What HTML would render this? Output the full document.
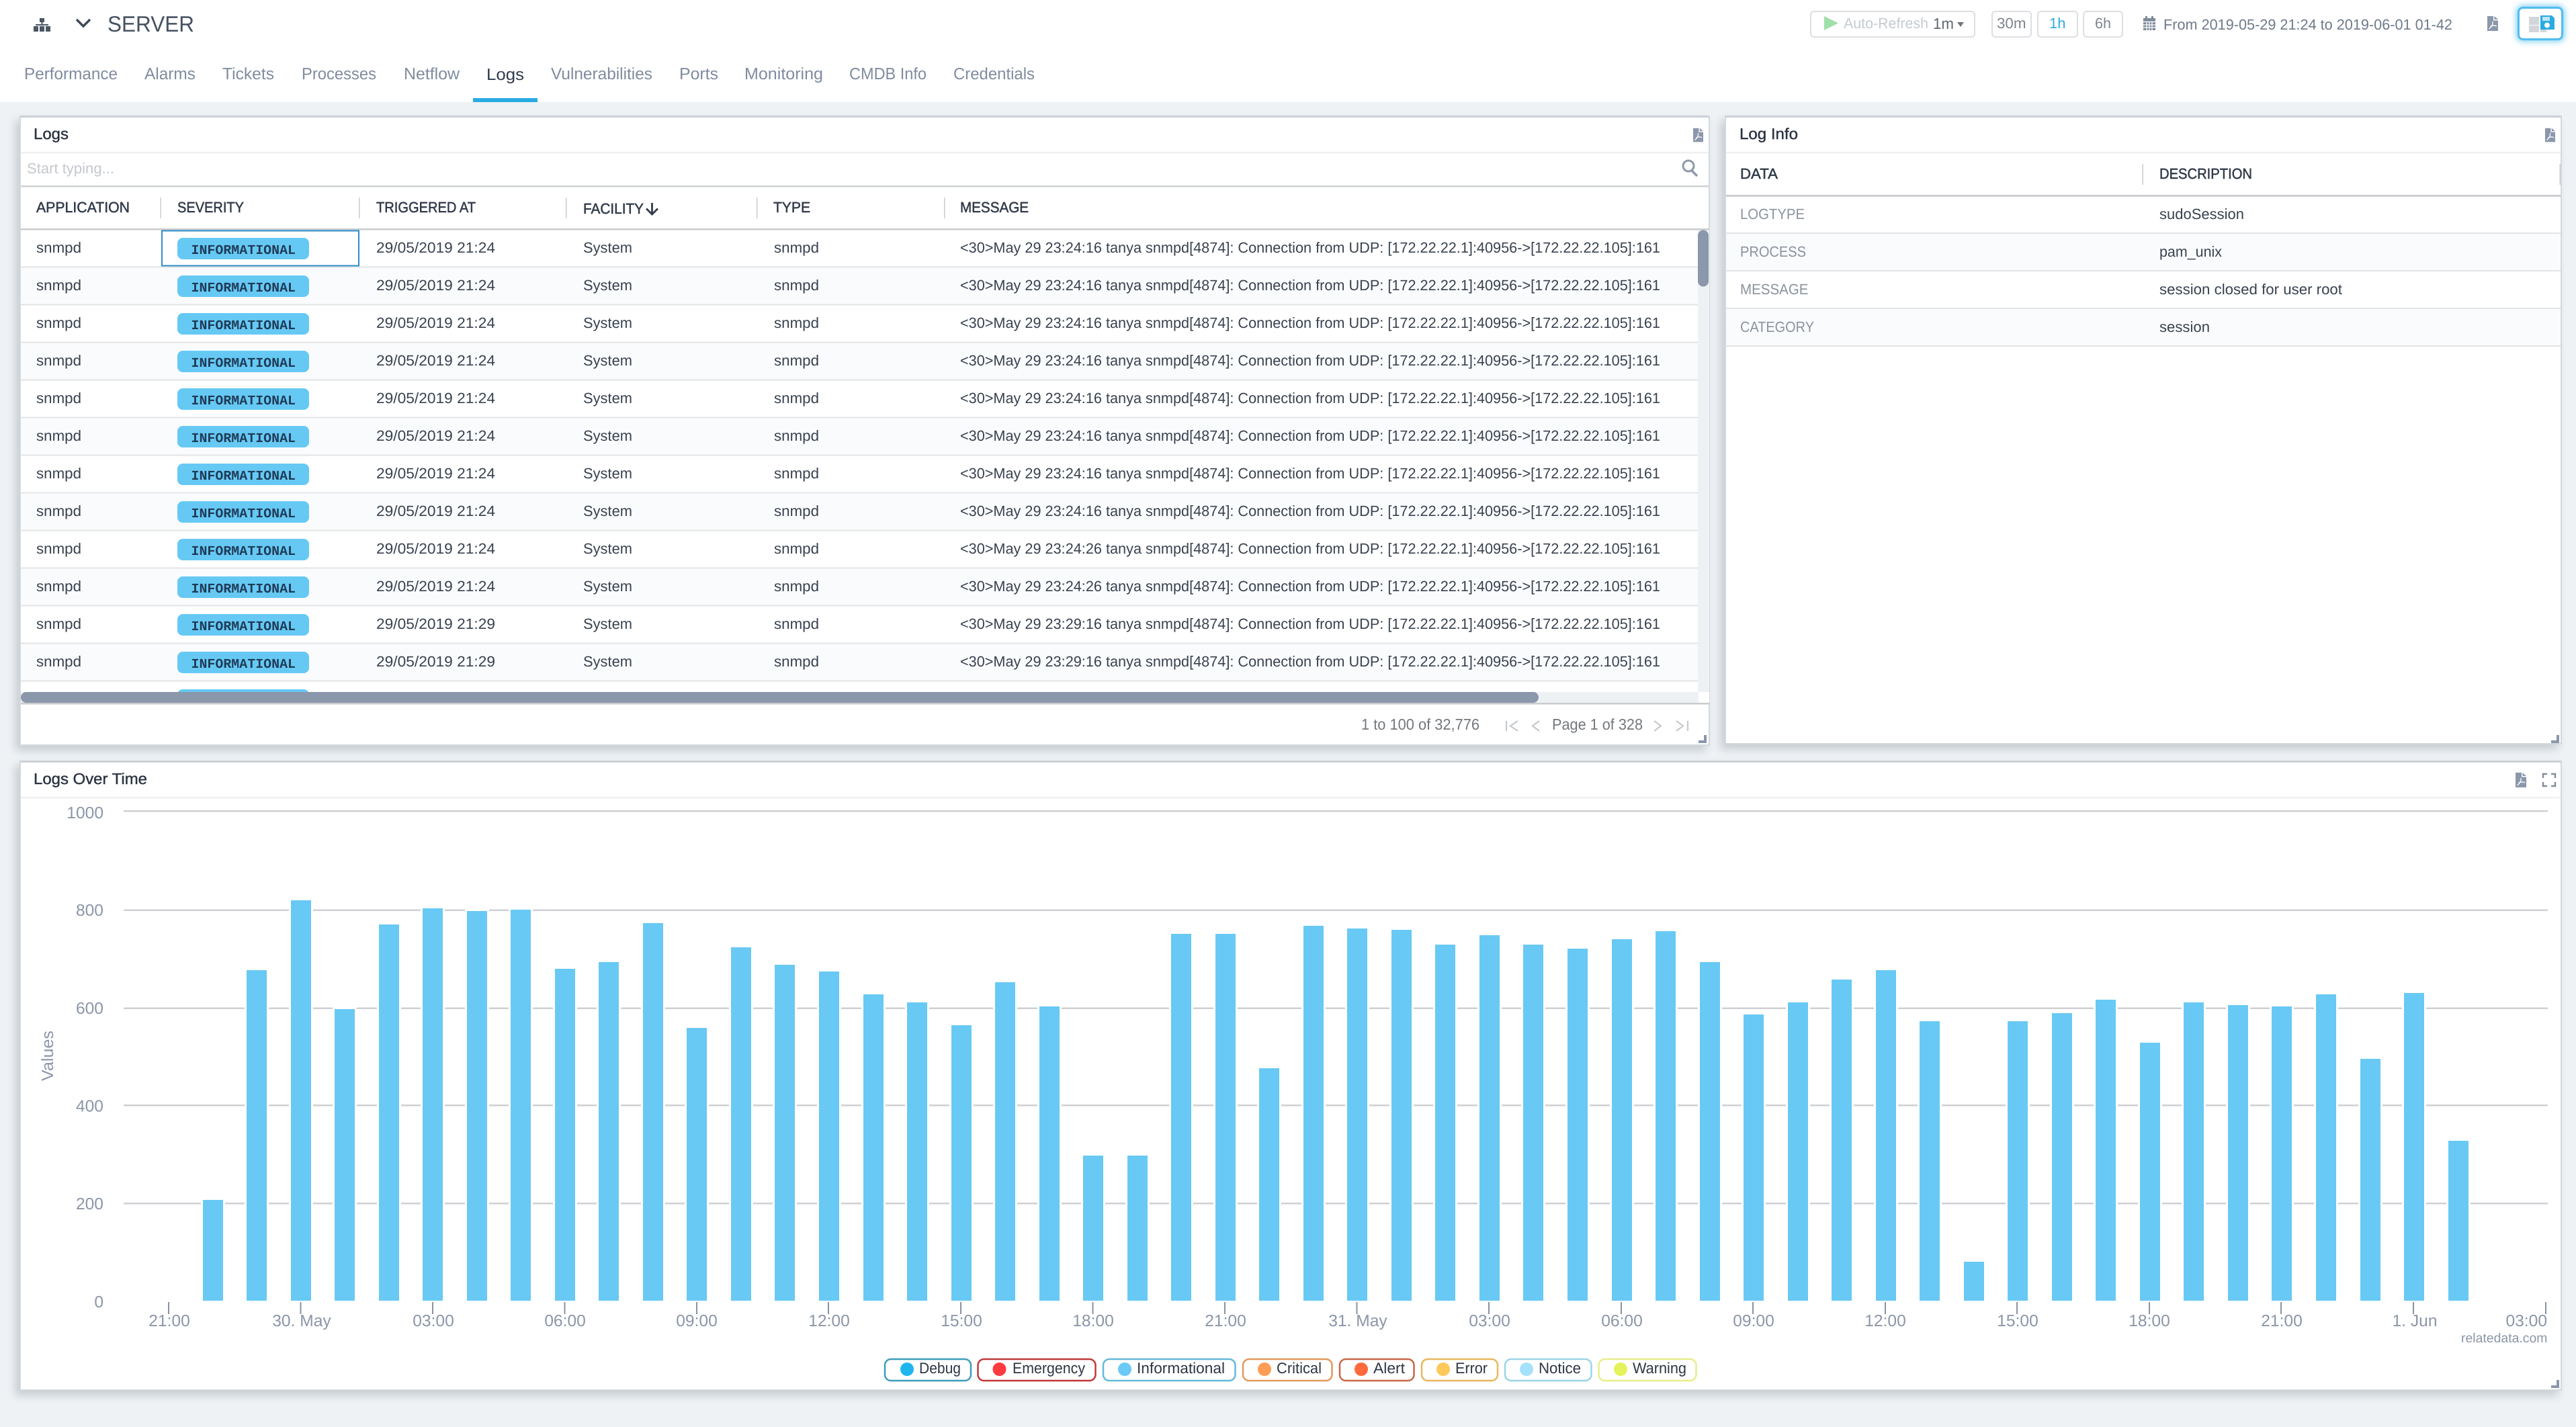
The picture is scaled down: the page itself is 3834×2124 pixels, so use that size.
<!DOCTYPE html>
<html lang="en"><head><meta charset="utf-8"><title>SERVER Logs</title>
<style>
html,body{margin:0;padding:0;width:3834px;height:2124px;overflow:hidden;background:#eef2f5}
.hd{position:absolute;left:0;top:0;width:3834px;height:152px;background:#fff}
.p{position:absolute;box-sizing:border-box;background:#fff;border:2px solid #d5d8dc;border-top:3px solid #cdd1d6;box-shadow:-6px 7px 12px rgba(45,55,65,.2)}
.sv{position:absolute;left:3747px;top:10px;width:68px;height:50px;box-sizing:border-box;background:#fff;border:3px solid #52bdee;border-radius:8px;box-shadow:0 0 9px 2px #7fd0f3}
svg{position:absolute;left:0;top:0;text-rendering:geometricPrecision}
text{font-family:"Liberation Sans",sans-serif;font-size:22px;fill:#39424f}
.tab{font-size:24.5px;fill:#7f8c9f}
.t{font-size:23px;fill:#2c3442;stroke:#2c3442;stroke-width:.45}
.h{font-size:22px;fill:#323b4a;stroke:#323b4a;stroke-width:.55}
.b{font-family:"Liberation Mono",monospace;font-size:20px;font-weight:bold;fill:#1f3b57}
.l{fill:#8a929c}
.a{font-size:24.6px;fill:#8b96a8}
.lg{font-size:22.7px;fill:#2e3644}
.pg{font-size:23px;fill:#73777c}
.btn{fill:#fff;stroke:#dcdfe2;stroke-width:2}
</style></head><body>
<div class="hd"></div>
<div class="p" style="left:29px;top:172px;width:2516px;height:938px"></div>
<div class="p" style="left:2567px;top:172px;width:1246px;height:936px"></div>
<div class="p" style="left:29px;top:1132px;width:3784px;height:938px"></div>
<div class="sv"></div>
<svg width="3834" height="2124" viewBox="0 0 3834 2124" xmlns="http://www.w3.org/2000/svg">
<defs>
<symbol id="pdf" viewBox="0 0 16 22"><path d="M0 0H9V6.5H16V22H0Z" fill="#8b97ab"/><path d="M10.5 0L16 5H10.5Z" fill="#8b97ab"/><path d="M2.5 19C6 16.5 8.5 12.500 8 8M4.500 15.500C8 13.500 11 13.500 14 15" fill="none" stroke="#fff" stroke-width="1.300"/></symbol>
<symbol id="hnd" viewBox="0 0 12 12"><path d="M8 0H12V12H0V8H8Z" fill="#8a97ab"/></symbol>
</defs>

<!-- top bar -->
<g fill="#4b5763"><rect x="59" y="27" width="7" height="6"/><rect x="61.500" y="33" width="2" height="4"/><rect x="53" y="36" width="19" height="2"/><rect x="50" y="39" width="7" height="8"/><rect x="59" y="39" width="7" height="8"/><rect x="68" y="39" width="7" height="8"/></g>
<polyline points="114,29 124,39 134,29" fill="none" stroke="#3f4a58" stroke-width="3.500"/>
<text x="160" y="47" style="font-size:33px;fill:#465262" textLength="129" lengthAdjust="spacingAndGlyphs">SERVER</text>
<text class="tab" x="36" y="118" textLength="139" lengthAdjust="spacingAndGlyphs">Performance</text>
<text class="tab" x="215" y="118" textLength="76" lengthAdjust="spacingAndGlyphs">Alarms</text>
<text class="tab" x="331" y="118" textLength="77" lengthAdjust="spacingAndGlyphs">Tickets</text>
<text class="tab" x="449" y="118" textLength="111" lengthAdjust="spacingAndGlyphs">Processes</text>
<text class="tab" x="601" y="118" textLength="83" lengthAdjust="spacingAndGlyphs">Netflow</text>
<text class="tab" x="724" y="119" style="fill:#2f3a4c" textLength="56" lengthAdjust="spacingAndGlyphs">Logs</text>
<text class="tab" x="820" y="118" textLength="151" lengthAdjust="spacingAndGlyphs">Vulnerabilities</text>
<text class="tab" x="1011" y="118" textLength="58" lengthAdjust="spacingAndGlyphs">Ports</text>
<text class="tab" x="1108" y="118" textLength="117" lengthAdjust="spacingAndGlyphs">Monitoring</text>
<text class="tab" x="1264" y="118" textLength="115" lengthAdjust="spacingAndGlyphs">CMDB Info</text>
<text class="tab" x="1419" y="118" textLength="121" lengthAdjust="spacingAndGlyphs">Credentials</text>
<rect x="704" y="146" width="96" height="6" fill="#29abe2"/>

<rect class="btn" x="2695" y="17" width="244" height="38" rx="5"/>
<polygon points="2715,24 2736,34.500 2715,45" fill="#9fe0a8"/>
<text x="2744" y="42" style="fill:#c5cbd0" textLength="126" lengthAdjust="spacingAndGlyphs">Auto-Refresh</text>
<text x="2877" y="43" style="font-size:23px;fill:#62686e" textLength="31" lengthAdjust="spacingAndGlyphs">1m</text>
<polygon points="2913,33 2923,33 2918,40" fill="#6e757c"/>
<rect class="btn" x="2965" y="17" width="58" height="38" rx="5"/>
<text x="2972" y="42" style="fill:#7e858c" textLength="43.500" lengthAdjust="spacingAndGlyphs">30m</text>
<rect class="btn" x="3033" y="17" width="59" height="38" rx="5"/>
<text x="3050" y="42" style="fill:#2bace2" textLength="24.500" lengthAdjust="spacingAndGlyphs">1h</text>
<rect class="btn" x="3101" y="17" width="58" height="38" rx="5"/>
<text x="3118" y="42" style="fill:#7e858c" textLength="24" lengthAdjust="spacingAndGlyphs">6h</text>
<g fill="#7f8b9b"><rect x="3193" y="24" width="3" height="5"/><rect x="3202" y="24" width="3" height="5"/><path d="M3190 27H3208V45H3190Z"/></g>
<path d="M3190 32.500H3208M3190 37H3208M3190 41H3208M3195 33V45M3199 33V45M3203 33V45" stroke="#fff" stroke-width="1.200" fill="none"/>
<text x="3220" y="44" style="fill:#6e7a8a" textLength="430" lengthAdjust="spacingAndGlyphs">From 2019-05-29 21:24 to 2019-06-01 01-42</text>
<use href="#pdf" x="3702" y="24" width="16" height="22"/>
<g fill="#d2d5da"><rect x="3764" y="25" width="15" height="12"/><rect x="3764" y="38" width="15" height="10"/><rect x="3781" y="44" width="9" height="4"/></g>
<path d="M3781 23H3798L3802 27V44H3781Z" fill="#29abe2"/>
<rect x="3784" y="25" width="11" height="6" fill="#bfe6f7"/>
<circle cx="3791" cy="37.500" r="4" fill="#fff"/>

<!-- Logs panel -->
<text class="t" x="50" y="207" textLength="52" lengthAdjust="spacingAndGlyphs">Logs</text>
<use href="#pdf" x="2520" y="190" width="15" height="22"/>
<rect x="31" y="226" width="2512" height="2.500" fill="#eff0f1"/>
<text x="40" y="258" style="fill:#c4c8cd" textLength="130" lengthAdjust="spacingAndGlyphs">Start typing...</text>
<circle cx="2513" cy="247" r="8" fill="none" stroke="#8e99ab" stroke-width="3"/><path d="M2518 254L2526 262" stroke="#8e99ab" stroke-width="3.500"/>
<rect x="31" y="276" width="2512" height="2.500" fill="#cfd2d5"/>
<text class="h" x="54" y="316" textLength="139" lengthAdjust="spacingAndGlyphs">APPLICATION</text>
<text class="h" x="264" y="316" textLength="99" lengthAdjust="spacingAndGlyphs">SEVERITY</text>
<text class="h" x="560" y="316" textLength="148" lengthAdjust="spacingAndGlyphs">TRIGGERED AT</text>
<text class="h" x="868" y="318" textLength="90" lengthAdjust="spacingAndGlyphs">FACILITY</text>
<path d="M970.500 302V318M962 310.500L970.500 319L979 310.500" fill="none" stroke="#323b4a" stroke-width="2.800"/>
<text class="h" x="1151" y="316" textLength="55" lengthAdjust="spacingAndGlyphs">TYPE</text>
<text class="h" x="1429" y="316" textLength="102" lengthAdjust="spacingAndGlyphs">MESSAGE</text>
<g fill="#c9ccd0"><rect x="238.500" y="294" width="1.500" height="31"/><rect x="534" y="294" width="1.500" height="31"/><rect x="842" y="294" width="1.500" height="31"/><rect x="1126" y="294" width="1.500" height="31"/><rect x="1405" y="294" width="1.500" height="31"/></g>
<rect x="31" y="340" width="2512" height="2.500" fill="#c8cbce"/>

<g fill="#fafbfd"><rect x="31" y="398" width="2496" height="55"/><rect x="31" y="510" width="2496" height="55"/><rect x="31" y="622" width="2496" height="55"/><rect x="31" y="734" width="2496" height="55"/><rect x="31" y="846" width="2496" height="55"/><rect x="31" y="958" width="2496" height="55"/></g>
<g fill="#e2e4e6"><rect x="31" y="396.500" width="2496" height="2"/><rect x="31" y="452.500" width="2496" height="2"/><rect x="31" y="508.500" width="2496" height="2"/><rect x="31" y="564.500" width="2496" height="2"/><rect x="31" y="620.500" width="2496" height="2"/><rect x="31" y="676.500" width="2496" height="2"/><rect x="31" y="732.500" width="2496" height="2"/><rect x="31" y="788.500" width="2496" height="2"/><rect x="31" y="844.500" width="2496" height="2"/><rect x="31" y="900.500" width="2496" height="2"/><rect x="31" y="956.500" width="2496" height="2"/><rect x="31" y="1012.500" width="2496" height="2"/></g>
<rect x="241" y="343.500" width="293" height="52" fill="none" stroke="#2f8fca" stroke-width="2"/>

<g fill="#66c9f4"><rect x="264" y="354" width="196" height="32" rx="8"/><rect x="264" y="410" width="196" height="32" rx="8"/><rect x="264" y="466" width="196" height="32" rx="8"/><rect x="264" y="522" width="196" height="32" rx="8"/><rect x="264" y="578" width="196" height="32" rx="8"/><rect x="264" y="634" width="196" height="32" rx="8"/><rect x="264" y="690" width="196" height="32" rx="8"/><rect x="264" y="746" width="196" height="32" rx="8"/><rect x="264" y="802" width="196" height="32" rx="8"/><rect x="264" y="858" width="196" height="32" rx="8"/><rect x="264" y="914" width="196" height="32" rx="8"/><rect x="264" y="970" width="196" height="32" rx="8"/><path d="M264 1031V1034C264 1029 268 1026 272 1026H452C456 1026 460 1029 460 1034V1031Z"/></g>

<g>
<text x="54" y="376" textLength="67" lengthAdjust="spacingAndGlyphs">snmpd</text><text class="b" x="284.500" y="378" textLength="155.500" lengthAdjust="spacingAndGlyphs">INFORMATIONAL</text><text x="560" y="376" textLength="177" lengthAdjust="spacingAndGlyphs">29/05/2019 21:24</text><text x="868" y="376" textLength="73" lengthAdjust="spacingAndGlyphs">System</text><text x="1152" y="376" textLength="67" lengthAdjust="spacingAndGlyphs">snmpd</text><text x="1429" y="376" textLength="1042" lengthAdjust="spacingAndGlyphs">&lt;30&gt;May 29 23:24:16 tanya snmpd[4874]: Connection from UDP: [172.22.22.1]:40956-&gt;[172.22.22.105]:161</text>
<text x="54" y="432" textLength="67" lengthAdjust="spacingAndGlyphs">snmpd</text><text class="b" x="284.500" y="434" textLength="155.500" lengthAdjust="spacingAndGlyphs">INFORMATIONAL</text><text x="560" y="432" textLength="177" lengthAdjust="spacingAndGlyphs">29/05/2019 21:24</text><text x="868" y="432" textLength="73" lengthAdjust="spacingAndGlyphs">System</text><text x="1152" y="432" textLength="67" lengthAdjust="spacingAndGlyphs">snmpd</text><text x="1429" y="432" textLength="1042" lengthAdjust="spacingAndGlyphs">&lt;30&gt;May 29 23:24:16 tanya snmpd[4874]: Connection from UDP: [172.22.22.1]:40956-&gt;[172.22.22.105]:161</text>
<text x="54" y="488" textLength="67" lengthAdjust="spacingAndGlyphs">snmpd</text><text class="b" x="284.500" y="490" textLength="155.500" lengthAdjust="spacingAndGlyphs">INFORMATIONAL</text><text x="560" y="488" textLength="177" lengthAdjust="spacingAndGlyphs">29/05/2019 21:24</text><text x="868" y="488" textLength="73" lengthAdjust="spacingAndGlyphs">System</text><text x="1152" y="488" textLength="67" lengthAdjust="spacingAndGlyphs">snmpd</text><text x="1429" y="488" textLength="1042" lengthAdjust="spacingAndGlyphs">&lt;30&gt;May 29 23:24:16 tanya snmpd[4874]: Connection from UDP: [172.22.22.1]:40956-&gt;[172.22.22.105]:161</text>
<text x="54" y="544" textLength="67" lengthAdjust="spacingAndGlyphs">snmpd</text><text class="b" x="284.500" y="546" textLength="155.500" lengthAdjust="spacingAndGlyphs">INFORMATIONAL</text><text x="560" y="544" textLength="177" lengthAdjust="spacingAndGlyphs">29/05/2019 21:24</text><text x="868" y="544" textLength="73" lengthAdjust="spacingAndGlyphs">System</text><text x="1152" y="544" textLength="67" lengthAdjust="spacingAndGlyphs">snmpd</text><text x="1429" y="544" textLength="1042" lengthAdjust="spacingAndGlyphs">&lt;30&gt;May 29 23:24:16 tanya snmpd[4874]: Connection from UDP: [172.22.22.1]:40956-&gt;[172.22.22.105]:161</text>
<text x="54" y="600" textLength="67" lengthAdjust="spacingAndGlyphs">snmpd</text><text class="b" x="284.500" y="602" textLength="155.500" lengthAdjust="spacingAndGlyphs">INFORMATIONAL</text><text x="560" y="600" textLength="177" lengthAdjust="spacingAndGlyphs">29/05/2019 21:24</text><text x="868" y="600" textLength="73" lengthAdjust="spacingAndGlyphs">System</text><text x="1152" y="600" textLength="67" lengthAdjust="spacingAndGlyphs">snmpd</text><text x="1429" y="600" textLength="1042" lengthAdjust="spacingAndGlyphs">&lt;30&gt;May 29 23:24:16 tanya snmpd[4874]: Connection from UDP: [172.22.22.1]:40956-&gt;[172.22.22.105]:161</text>
<text x="54" y="656" textLength="67" lengthAdjust="spacingAndGlyphs">snmpd</text><text class="b" x="284.500" y="658" textLength="155.500" lengthAdjust="spacingAndGlyphs">INFORMATIONAL</text><text x="560" y="656" textLength="177" lengthAdjust="spacingAndGlyphs">29/05/2019 21:24</text><text x="868" y="656" textLength="73" lengthAdjust="spacingAndGlyphs">System</text><text x="1152" y="656" textLength="67" lengthAdjust="spacingAndGlyphs">snmpd</text><text x="1429" y="656" textLength="1042" lengthAdjust="spacingAndGlyphs">&lt;30&gt;May 29 23:24:16 tanya snmpd[4874]: Connection from UDP: [172.22.22.1]:40956-&gt;[172.22.22.105]:161</text>
<text x="54" y="712" textLength="67" lengthAdjust="spacingAndGlyphs">snmpd</text><text class="b" x="284.500" y="714" textLength="155.500" lengthAdjust="spacingAndGlyphs">INFORMATIONAL</text><text x="560" y="712" textLength="177" lengthAdjust="spacingAndGlyphs">29/05/2019 21:24</text><text x="868" y="712" textLength="73" lengthAdjust="spacingAndGlyphs">System</text><text x="1152" y="712" textLength="67" lengthAdjust="spacingAndGlyphs">snmpd</text><text x="1429" y="712" textLength="1042" lengthAdjust="spacingAndGlyphs">&lt;30&gt;May 29 23:24:16 tanya snmpd[4874]: Connection from UDP: [172.22.22.1]:40956-&gt;[172.22.22.105]:161</text>
<text x="54" y="768" textLength="67" lengthAdjust="spacingAndGlyphs">snmpd</text><text class="b" x="284.500" y="770" textLength="155.500" lengthAdjust="spacingAndGlyphs">INFORMATIONAL</text><text x="560" y="768" textLength="177" lengthAdjust="spacingAndGlyphs">29/05/2019 21:24</text><text x="868" y="768" textLength="73" lengthAdjust="spacingAndGlyphs">System</text><text x="1152" y="768" textLength="67" lengthAdjust="spacingAndGlyphs">snmpd</text><text x="1429" y="768" textLength="1042" lengthAdjust="spacingAndGlyphs">&lt;30&gt;May 29 23:24:16 tanya snmpd[4874]: Connection from UDP: [172.22.22.1]:40956-&gt;[172.22.22.105]:161</text>
<text x="54" y="824" textLength="67" lengthAdjust="spacingAndGlyphs">snmpd</text><text class="b" x="284.500" y="826" textLength="155.500" lengthAdjust="spacingAndGlyphs">INFORMATIONAL</text><text x="560" y="824" textLength="177" lengthAdjust="spacingAndGlyphs">29/05/2019 21:24</text><text x="868" y="824" textLength="73" lengthAdjust="spacingAndGlyphs">System</text><text x="1152" y="824" textLength="67" lengthAdjust="spacingAndGlyphs">snmpd</text><text x="1429" y="824" textLength="1042" lengthAdjust="spacingAndGlyphs">&lt;30&gt;May 29 23:24:26 tanya snmpd[4874]: Connection from UDP: [172.22.22.1]:40956-&gt;[172.22.22.105]:161</text>
<text x="54" y="880" textLength="67" lengthAdjust="spacingAndGlyphs">snmpd</text><text class="b" x="284.500" y="882" textLength="155.500" lengthAdjust="spacingAndGlyphs">INFORMATIONAL</text><text x="560" y="880" textLength="177" lengthAdjust="spacingAndGlyphs">29/05/2019 21:24</text><text x="868" y="880" textLength="73" lengthAdjust="spacingAndGlyphs">System</text><text x="1152" y="880" textLength="67" lengthAdjust="spacingAndGlyphs">snmpd</text><text x="1429" y="880" textLength="1042" lengthAdjust="spacingAndGlyphs">&lt;30&gt;May 29 23:24:26 tanya snmpd[4874]: Connection from UDP: [172.22.22.1]:40956-&gt;[172.22.22.105]:161</text>
<text x="54" y="936" textLength="67" lengthAdjust="spacingAndGlyphs">snmpd</text><text class="b" x="284.500" y="938" textLength="155.500" lengthAdjust="spacingAndGlyphs">INFORMATIONAL</text><text x="560" y="936" textLength="177" lengthAdjust="spacingAndGlyphs">29/05/2019 21:29</text><text x="868" y="936" textLength="73" lengthAdjust="spacingAndGlyphs">System</text><text x="1152" y="936" textLength="67" lengthAdjust="spacingAndGlyphs">snmpd</text><text x="1429" y="936" textLength="1042" lengthAdjust="spacingAndGlyphs">&lt;30&gt;May 29 23:29:16 tanya snmpd[4874]: Connection from UDP: [172.22.22.1]:40956-&gt;[172.22.22.105]:161</text>
<text x="54" y="992" textLength="67" lengthAdjust="spacingAndGlyphs">snmpd</text><text class="b" x="284.500" y="994" textLength="155.500" lengthAdjust="spacingAndGlyphs">INFORMATIONAL</text><text x="560" y="992" textLength="177" lengthAdjust="spacingAndGlyphs">29/05/2019 21:29</text><text x="868" y="992" textLength="73" lengthAdjust="spacingAndGlyphs">System</text><text x="1152" y="992" textLength="67" lengthAdjust="spacingAndGlyphs">snmpd</text><text x="1429" y="992" textLength="1042" lengthAdjust="spacingAndGlyphs">&lt;30&gt;May 29 23:29:16 tanya snmpd[4874]: Connection from UDP: [172.22.22.1]:40956-&gt;[172.22.22.105]:161</text>
</g>

<rect x="2527" y="342.500" width="17" height="687.500" fill="#eef1f4"/>
<rect x="2527" y="342.500" width="16" height="84" rx="8" fill="#8b97aa"/>
<rect x="31" y="1030" width="2497" height="16" fill="#eef1f4"/>
<rect x="2528" y="1030" width="16" height="16" fill="#fff"/>
<rect x="31" y="1030" width="2259" height="16" rx="8" fill="#8b97aa"/>
<rect x="31" y="1046" width="2513" height="2.500" fill="#c9cbce"/>

<text class="pg" x="2026" y="1086" textLength="176" lengthAdjust="spacingAndGlyphs">1 to 100 of 32,776</text>
<text class="pg" x="2310" y="1086" textLength="135" lengthAdjust="spacingAndGlyphs">Page 1 of 328</text>
<g fill="none" stroke="#c5c8cc" stroke-width="2.200"><path d="M2242 1073V1088M2259 1073L2248 1080.500L2259 1088M2291 1073L2281 1080.500L2291 1088M2462 1073L2472 1080.500L2462 1088M2495 1073L2505 1080.500L2495 1088M2512 1073V1088"/></g>
<use href="#hnd" x="2528" y="1094" width="12" height="12"/>

<!-- Log Info panel -->
<text class="t" x="2589" y="207" textLength="87" lengthAdjust="spacingAndGlyphs">Log Info</text>
<use href="#pdf" x="3788" y="190" width="15" height="22"/>
<rect x="2569" y="226" width="1242" height="2.500" fill="#eff0f1"/>
<text class="h" x="2590" y="266" textLength="56" lengthAdjust="spacingAndGlyphs">DATA</text>
<text class="h" x="3214" y="266" textLength="138" lengthAdjust="spacingAndGlyphs">DESCRIPTION</text>
<rect x="3188.500" y="244" width="1.500" height="31" fill="#c9ccd0"/><rect x="3809.500" y="244" width="1.500" height="31" fill="#c9ccd0"/>
<rect x="2569" y="290" width="1242" height="2.800" fill="#c8cbce"/>
<g fill="#fafbfd"><rect x="2569" y="348" width="1242" height="55"/><rect x="2569" y="460" width="1242" height="55"/></g>
<g fill="#e2e4e6"><rect x="2569" y="346" width="1242" height="2"/><rect x="2569" y="402" width="1242" height="2"/><rect x="2569" y="458" width="1242" height="2"/><rect x="2569" y="514" width="1242" height="2"/></g>
<text class="l" x="2590" y="326" textLength="96" lengthAdjust="spacingAndGlyphs">LOGTYPE</text><text x="3214" y="326" textLength="126" lengthAdjust="spacingAndGlyphs">sudoSession</text>
<text class="l" x="2590" y="382" textLength="98" lengthAdjust="spacingAndGlyphs">PROCESS</text><text x="3214" y="382" textLength="93" lengthAdjust="spacingAndGlyphs">pam_unix</text>
<text class="l" x="2590" y="438" textLength="101.500" lengthAdjust="spacingAndGlyphs">MESSAGE</text><text x="3214" y="438" textLength="272" lengthAdjust="spacingAndGlyphs">session closed for user root</text>
<text class="l" x="2590" y="494" textLength="110" lengthAdjust="spacingAndGlyphs">CATEGORY</text><text x="3214" y="494" textLength="75" lengthAdjust="spacingAndGlyphs">session</text>
<use href="#hnd" x="3797" y="1094" width="12" height="12"/>

<!-- Chart panel -->
<text class="t" x="50" y="1167" textLength="169" lengthAdjust="spacingAndGlyphs">Logs Over Time</text>
<use href="#pdf" x="3744" y="1150" width="16" height="22"/>
<path d="M3785 1158V1152H3791M3797 1152H3803V1158M3803 1164V1170H3797M3791 1170H3785V1164" fill="none" stroke="#828d9d" stroke-width="2.500"/>
<rect x="31" y="1186" width="3780" height="2.500" fill="#eff0f1"/>
<g fill="#cfd0d4"><rect x="184" y="1206" width="3608" height="2.500"/><rect x="184" y="1353.500" width="3608" height="2.500"/><rect x="184" y="1499.500" width="3608" height="2.500"/><rect x="184" y="1644" width="3608" height="2.500"/><rect x="184" y="1790" width="3608" height="2.500"/></g>
<g text-anchor="end">
<text class="a" x="154" y="1218">1000</text><text class="a" x="154" y="1363">800</text><text class="a" x="154" y="1509">600</text><text class="a" x="154" y="1654.500">400</text><text class="a" x="154" y="1800">200</text><text class="a" x="154" y="1946">0</text>
</g>
<text class="a" transform="translate(79,1609) rotate(-90)" x="0" y="0" textLength="75" lengthAdjust="spacingAndGlyphs">Values</text>

<g fill="#68c9f4" stroke="#fff" stroke-width="6" paint-order="stroke">
<rect x="302" y="1786" width="30" height="150"/><rect x="367" y="1444" width="30" height="492"/><rect x="433" y="1340" width="30" height="596"/><rect x="498" y="1502" width="30" height="434"/><rect x="564" y="1376" width="30" height="560"/><rect x="629" y="1352" width="30" height="584"/><rect x="695" y="1356" width="30" height="580"/><rect x="760" y="1354" width="30" height="582"/><rect x="826" y="1442" width="30" height="494"/><rect x="891" y="1432" width="30" height="504"/><rect x="957" y="1374" width="30" height="562"/><rect x="1022" y="1530" width="30" height="406"/><rect x="1088" y="1410" width="30" height="526"/><rect x="1153" y="1436" width="30" height="500"/><rect x="1219" y="1446" width="30" height="490"/><rect x="1285" y="1480" width="30" height="456"/><rect x="1350" y="1492" width="30" height="444"/><rect x="1416" y="1526" width="30" height="410"/><rect x="1481" y="1462" width="30" height="474"/><rect x="1547" y="1498" width="30" height="438"/><rect x="1612" y="1720" width="30" height="216"/><rect x="1678" y="1720" width="30" height="216"/><rect x="1743" y="1390" width="30" height="546"/><rect x="1809" y="1390" width="30" height="546"/><rect x="1874" y="1590" width="30" height="346"/><rect x="1940" y="1378" width="30" height="558"/><rect x="2005" y="1382" width="30" height="554"/><rect x="2071" y="1384" width="30" height="552"/><rect x="2136" y="1406" width="30" height="530"/><rect x="2202" y="1392" width="30" height="544"/><rect x="2267" y="1406" width="30" height="530"/><rect x="2333" y="1412" width="30" height="524"/><rect x="2399" y="1398" width="30" height="538"/><rect x="2464" y="1386" width="30" height="550"/><rect x="2530" y="1432" width="30" height="504"/><rect x="2595" y="1510" width="30" height="426"/><rect x="2661" y="1492" width="30" height="444"/><rect x="2726" y="1458" width="30" height="478"/><rect x="2792" y="1444" width="30" height="492"/><rect x="2857" y="1520" width="30" height="416"/><rect x="2923" y="1878" width="30" height="58"/><rect x="2988" y="1520" width="30" height="416"/><rect x="3054" y="1508" width="30" height="428"/><rect x="3119" y="1488" width="30" height="448"/><rect x="3185" y="1552" width="30" height="384"/><rect x="3250" y="1492" width="30" height="444"/><rect x="3316" y="1496" width="30" height="440"/><rect x="3381" y="1498" width="30" height="438"/><rect x="3447" y="1480" width="30" height="456"/><rect x="3513" y="1576" width="30" height="360"/><rect x="3578" y="1478" width="30" height="458"/><rect x="3644" y="1698" width="30" height="238"/>
</g>

<g fill="#8a93a0"><rect x="250" y="1938" width="2" height="18"/><rect x="446.500" y="1938" width="2" height="18"/><rect x="643" y="1938" width="2" height="18"/><rect x="839.500" y="1938" width="2" height="18"/><rect x="1036" y="1938" width="2" height="18"/><rect x="1232" y="1938" width="2" height="18"/><rect x="1429" y="1938" width="2" height="18"/><rect x="1625.500" y="1938" width="2" height="18"/><rect x="1822" y="1938" width="2" height="18"/><rect x="2018.500" y="1938" width="2" height="18"/><rect x="2215" y="1938" width="2" height="18"/><rect x="2412" y="1938" width="2" height="18"/><rect x="2608" y="1938" width="2" height="18"/><rect x="2805" y="1938" width="2" height="18"/><rect x="3001" y="1938" width="2" height="18"/><rect x="3198" y="1938" width="2" height="18"/><rect x="3394" y="1938" width="2" height="18"/><rect x="3591" y="1938" width="2" height="18"/><rect x="3788" y="1938" width="2" height="18"/></g>
<g text-anchor="middle">
<text class="a" x="252" y="1974">21:00</text><text class="a" x="449" y="1974">30. May</text><text class="a" x="645" y="1974">03:00</text><text class="a" x="841" y="1974">06:00</text><text class="a" x="1037" y="1974">09:00</text><text class="a" x="1234" y="1974">12:00</text><text class="a" x="1431" y="1974">15:00</text><text class="a" x="1627" y="1974">18:00</text><text class="a" x="1824" y="1974">21:00</text><text class="a" x="2021" y="1974">31. May</text><text class="a" x="2217" y="1974">03:00</text><text class="a" x="2414" y="1974">06:00</text><text class="a" x="2610" y="1974">09:00</text><text class="a" x="2806" y="1974">12:00</text><text class="a" x="3003" y="1974">15:00</text><text class="a" x="3199" y="1974">18:00</text><text class="a" x="3396" y="1974">21:00</text><text class="a" x="3594" y="1974">1. Jun</text>
</g>
<text class="a" x="3791" y="1974" text-anchor="end">03:00</text>
<text x="3663" y="1998" style="font-size:19.500px;fill:#8b96a8" textLength="128.500" lengthAdjust="spacingAndGlyphs">relatedata.com</text>
<use href="#hnd" x="3797" y="2054" width="12" height="12"/>

<!-- legend -->
<g fill="#fff" stroke-width="2.500">
<rect x="1317" y="2023" width="128" height="32" rx="9" stroke="#3d9dbd"/>
<rect x="1455.500" y="2023" width="175" height="32" rx="9" stroke="#c0393b"/>
<rect x="1642" y="2023" width="196.500" height="32" rx="9" stroke="#66b9d9"/>
<rect x="1850" y="2023" width="132.500" height="32" rx="9" stroke="#e09a5c"/>
<rect x="1994" y="2023" width="110.500" height="32" rx="9" stroke="#c96748"/>
<rect x="2116" y="2023" width="113" height="32" rx="9" stroke="#e8b75c"/>
<rect x="2240" y="2023" width="128.500" height="32" rx="9" stroke="#9ad5e5"/>
<rect x="2379.500" y="2023" width="145" height="32" rx="9" stroke="#e7ee8a"/>
</g>
<circle cx="1350" cy="2038" r="10" fill="#1fb6f0"/><circle cx="1487.500" cy="2038" r="10" fill="#ff3b3f"/><circle cx="1674" cy="2038" r="10" fill="#6ac9f5"/><circle cx="1882" cy="2038" r="10" fill="#ff9c55"/><circle cx="2026" cy="2038" r="10" fill="#ff6a3c"/><circle cx="2148" cy="2038" r="10" fill="#ffc85a"/><circle cx="2272" cy="2038" r="10" fill="#a5e1fa"/><circle cx="2412" cy="2038" r="10" fill="#e5f25c"/>
<text class="lg" x="1368" y="2044" textLength="62" lengthAdjust="spacingAndGlyphs">Debug</text>
<text class="lg" x="1507" y="2044" textLength="108" lengthAdjust="spacingAndGlyphs">Emergency</text>
<text class="lg" x="1692" y="2044" textLength="131" lengthAdjust="spacingAndGlyphs">Informational</text>
<text class="lg" x="1900" y="2044" textLength="67" lengthAdjust="spacingAndGlyphs">Critical</text>
<text class="lg" x="2044" y="2044" textLength="47" lengthAdjust="spacingAndGlyphs">Alert</text>
<text class="lg" x="2166" y="2044" textLength="48" lengthAdjust="spacingAndGlyphs">Error</text>
<text class="lg" x="2290" y="2044" textLength="63" lengthAdjust="spacingAndGlyphs">Notice</text>
<text class="lg" x="2430" y="2044" textLength="80" lengthAdjust="spacingAndGlyphs">Warning</text>
</svg>
</body></html>
